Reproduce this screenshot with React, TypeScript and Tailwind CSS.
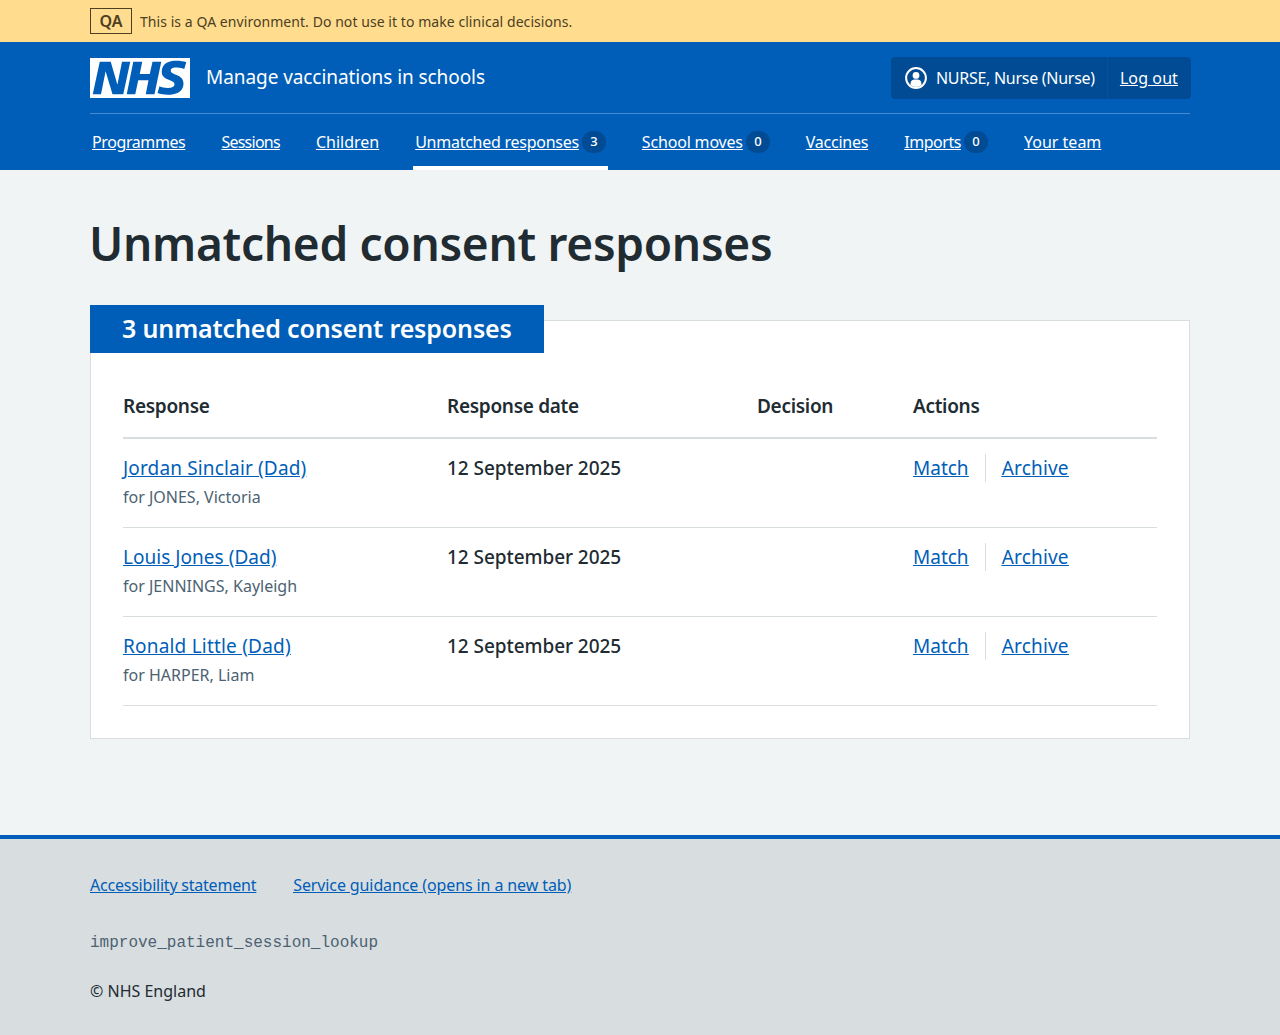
const font = { fontFamily: '"Noto Sans", sans-serif' };

const navItems = [
  { label: "Programmes", tracking: "tracking-[-0.4px]" },
  { label: "Sessions", tracking: "tracking-[-0.75px]" },
  { label: "Children", tracking: "tracking-normal" },
  { label: "Unmatched responses", tracking: "tracking-[-0.26px]", count: 3, active: true },
  { label: "School moves", tracking: "tracking-[-0.18px]", count: 0 },
  { label: "Vaccines", tracking: "tracking-[-0.25px]" },
  { label: "Imports", tracking: "tracking-[-0.45px]", count: 0 },
  { label: "Your team", tracking: "tracking-normal" },
];

const rows = [
  { name: "Jordan Sinclair (Dad)", tracking: "tracking-[0.15px]", child: "for JONES, Victoria" },
  { name: "Louis Jones (Dad)", tracking: "tracking-[0.03px]", child: "for JENNINGS, Kayleigh" },
  { name: "Ronald Little (Dad)", tracking: "tracking-[0.2px]", child: "for HARPER, Liam" },
];

const NhsLogo = () => (
  <svg viewBox="0 0 40 16" className="h-10 w-[100px] block">
    <path fill="#fff" d="M0 0h40v16H0z" />
    <path
      fill="#005eb8"
      d="M3.9 1.5h4.4l2.6 9h.1l1.8-9h3.3l-2.8 13H9l-2.7-9h-.1l-1.8 9H1.1M17.3 1.5h3.6l-1 4.9h4L25 1.5h3.5l-2.7 13h-3.5l1.1-5.6h-4.1l-1.2 5.6h-3.4M37.7 4.4c-.7-.3-1.6-.6-2.9-.6-1.4 0-2.5.2-2.5 1.3 0 1.8 5.1 1.2 5.1 5.1 0 3.6-3.3 4.5-6.4 4.5-1.3 0-2.9-.3-4-.7l.8-2.7c.7.4 2.1.7 3.2.7s2.8-.2 2.8-1.5c0-2.1-5.1-1.3-5.1-5 0-3.4 2.9-4.4 5.8-4.4 1.6 0 3.1.2 4 .6"
    />
  </svg>
);

const UserIcon = () => (
  <svg viewBox="0 0 22 22" className="h-[22px] w-[22px]">
    <circle cx="11" cy="11" r="9.9" fill="none" stroke="#fff" strokeWidth="2" />
    <circle cx="11" cy="8.4" r="3.4" fill="#fff" />
    <path fill="#fff" d="M5.6 18v-1.8c0-2.2 1.8-3.8 4-3.8h2.8c2.2 0 4 1.6 4 3.8V18c-1.5 1.3-3.4 2-5.4 2s-3.900-.7-5.400-2z" />
  </svg>
);

export default function App() {
  return (
    <div style={font} className="min-h-[1035px] flex flex-col bg-[#f0f4f5] text-[#212b32]">
      {/* QA banner */}
      <div className="h-[42px] bg-[#ffdc8e]">
        <div className="mx-[90px] flex h-[42px] items-center">
          <span className="flex h-[26px] w-[42px] items-center justify-center border border-[#4c3f22] text-[16px] font-semibold text-[#4c3f22]">
            QA
          </span>
          <span className="ml-2 text-[14px] tracking-[0.06px] text-[#4c3f22]">
            This is a QA environment. Do not use it to make clinical decisions.
          </span>
        </div>
      </div>

      {/* Header */}
      <header className="bg-[#005eb8] text-white">
        <div className="mx-[90px]">
          <div className="flex h-[72px] items-start justify-between border-b border-[#418bd3] pt-4">
            <div className="flex items-center">
              <NhsLogo />
              <span className="ml-4 pb-0.5 text-[19px] tracking-[-0.07px]">Manage vaccinations in schools</span>
            </div>
            <div className="-mt-px mr-[-1px] flex h-[42px] items-center rounded bg-[#004b93] text-[16px]">
              <div className="flex h-full items-center gap-[9px] pl-[14px] pr-3">
                <UserIcon />
                <span className="tracking-[-0.27px]">NURSE, Nurse (Nurse)</span>
              </div>
              <div className="flex h-full items-center border-l border-[#00549f] pl-3 pr-[13px]">
                <a className="tracking-[0.1px] underline">Log out</a>
              </div>
            </div>
          </div>
          <nav className="flex h-[56px] gap-8">
            {navItems.map((item) => (
              <div
                key={item.label}
                className={`flex items-center gap-[3px] border-b-4 px-0.5 pt-1 ${
                  item.active ? "border-white" : "border-transparent"
                }`}
              >
                <a className={`text-[16px] underline ${item.tracking}`}>{item.label}</a>
                {item.count !== undefined && (
                  <span className="flex h-[22px] w-[24px] items-center justify-center rounded-full bg-[#004b93] text-[13px] font-medium">
                    {item.count}
                  </span>
                )}
              </div>
            ))}
          </nav>
        </div>
      </header>

      {/* Main */}
      <main className="mx-[90px] flex-1 pt-[43px]">
        <h1 className="-ml-px text-[46px] font-semibold leading-[60px] tracking-[-0.3px]">Unmatched consent responses</h1>

        <section className="relative mt-[47px] border border-[#d8dde0] bg-white px-8 pb-8 pt-[32px]">
          <h2 className="absolute left-[-1px] top-[-16px] flex h-12 w-[454px] items-center bg-[#005eb8] px-8 text-[25px] font-semibold tracking-[-0.14px] text-white">
            3 unmatched consent responses
          </h2>
          <table className="mt-[32px] w-full table-fixed text-left">
            <thead>
              <tr className="border-b-2 border-[#d8dde0] text-[19px] tracking-[-0.3px]">
                <th className="w-[324px] pb-[17px] pt-[7px] font-semibold leading-[28px]">Response</th>
                <th className="w-[310px] pb-[17px] pt-[7px] font-semibold leading-[28px]">Response date</th>
                <th className="w-[156px] pb-[17px] pt-[7px] font-semibold leading-[28px]">Decision</th>
                <th className="pb-[17px] pt-[7px] font-semibold leading-[28px]">Actions</th>
              </tr>
            </thead>
            <tbody>
              {rows.map((row) => (
                <tr key={row.name} className="border-b border-[#d8dde0] align-top">
                  <td className="h-[89px] pt-[15px]">
                    <a className={`block text-[19px] leading-[28px] text-[#005eb8] underline ${row.tracking}`}>{row.name}</a>
                    <p className="mt-[1px] text-[16px] leading-[28px] text-[#4c6272]">{row.child}</p>
                  </td>
                  <td className="pt-[15px] text-[19px] font-medium leading-[28px] tracking-[-0.06px]">12 September 2025</td>
                  <td className="pt-[15px]" />
                  <td className="pt-[15px]">
                    <div className="flex text-[19px] leading-[28px] text-[#005eb8] underline">
                      <a className="border-r border-[#d8dde0] pr-4">Match</a>
                      <a className="pl-4 tracking-[0.2px]">Archive</a>
                    </div>
                  </td>
                </tr>
              ))}
            </tbody>
          </table>
        </section>
      </main>

      {/* Footer */}
      <footer className="h-[200px] border-t-4 border-[#005eb8] bg-[#d8dde0] px-[90px] pt-8">
        <div className="flex gap-[37px] text-[16px] leading-7 text-[#005eb8] underline">
          <a className="tracking-[-0.22px]">Accessibility statement</a>
          <a className="tracking-[-0.11px]">Service guidance (opens in a new tab)</a>
        </div>
        <p className="mt-[32px] text-[16px] leading-6 text-[#4c6272]" style={{ fontFamily: '"Liberation Mono", monospace' }}>
          improve_patient_session_lookup
        </p>
        <p className="mt-[24px] text-[16px] leading-6">© NHS England</p>
      </footer>
    </div>
  );
}
